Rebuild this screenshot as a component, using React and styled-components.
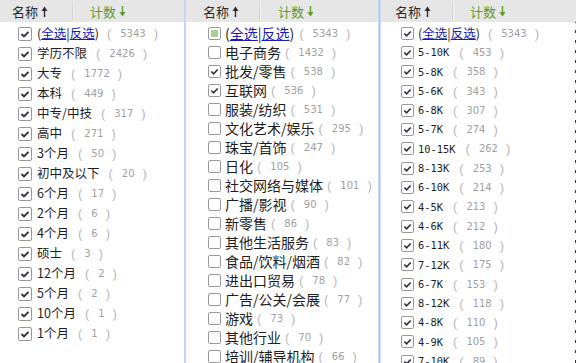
import React from "react";
import styled, { createGlobalStyle } from "styled-components";

const GlobalStyle = createGlobalStyle`
  html, body {
    margin: 0;
    padding: 0;
    background: #fff;
  }
  body {
    font-family: "Noto Sans CJK SC", "Liberation Sans", sans-serif;
  }
`;

const leftItems = [
  ["学历不限", 2426],
  ["大专", 1772],
  ["本科", 449],
  ["中专/中技", 317],
  ["高中", 271],
  ["3个月", 50],
  ["初中及以下", 20],
  ["6个月", 17],
  ["2个月", 6],
  ["4个月", 6],
  ["硕士", 3],
  ["12个月", 2],
  ["5个月", 2],
  ["10个月", 1],
  ["1个月", 1],
].map(([label, count]) => ({ label, count, checked: true }));

const middleItems = [
  ["电子商务", 1432, false],
  ["批发/零售", 538, true],
  ["互联网", 536, true],
  ["服装/纺织", 531, false],
  ["文化艺术/娱乐", 295, false],
  ["珠宝/首饰", 247, false],
  ["日化", 105, false],
  ["社交网络与媒体", 101, false],
  ["广播/影视", 90, false],
  ["新零售", 86, false],
  ["其他生活服务", 83, false],
  ["食品/饮料/烟酒", 82, false],
  ["进出口贸易", 78, false],
  ["广告/公关/会展", 77, false],
  ["游戏", 73, false],
  ["其他行业", 70, false],
  ["培训/辅导机构", 66, false],
].map(([label, count, checked]) => ({ label, count, checked }));

const rightItems = [
  ["5-10K", 453],
  ["5-8K", 358],
  ["5-6K", 343],
  ["6-8K", 307],
  ["5-7K", 274],
  ["10-15K", 262],
  ["8-13K", 253],
  ["6-10K", 214],
  ["4-5K", 213],
  ["4-6K", 212],
  ["6-11K", 180],
  ["7-12K", 175],
  ["6-7K", 153],
  ["8-12K", 118],
  ["4-8K", 110],
  ["4-9K", 105],
  ["7-10K", 89],
].map(([label, count]) => ({ label, count, checked: true }));

// per-panel metrics, measured off the screenshot
const panels = [
  {
    key: "edu",
    width: 184,
    head: { name: 12, divider: 72, count: 17 },
    rowH: 20,
    indent: 18,
    box: 14,
    font: 12.5,
    mono: false,
    gap: 9,
    all: "checked",
    items: leftItems,
  },
  {
    key: "industry",
    width: 192,
    head: { name: 17, divider: 73, count: 18 },
    rowH: 19,
    indent: 22,
    box: 13,
    font: 14,
    mono: false,
    gap: 4,
    all: "partial",
    items: middleItems,
  },
  {
    key: "salary",
    width: 195,
    head: { name: 14, divider: 71, count: 17 },
    rowH: 19.3,
    indent: 20,
    box: 13,
    font: 12.5,
    mono: true,
    gap: 10,
    all: "checked",
    items: rightItems,
    dotted: true,
  },
];

function Arrow({ down }) {
  return (
    <svg width="7" height="11" viewBox="0 0 7 11">
      {down ? (
        <>
          <line x1="3.5" y1="0" x2="3.5" y2="8" stroke="currentColor" strokeWidth="1.4" />
          <polygon points="0.5,6 6.5,6 3.5,10.5" fill="currentColor" />
        </>
      ) : (
        <>
          <line x1="3.5" y1="3" x2="3.5" y2="11" stroke="currentColor" strokeWidth="1.4" />
          <polygon points="0.5,5 6.5,5 3.5,0.5" fill="currentColor" />
        </>
      )}
    </svg>
  );
}

function Check({ state, size, gap }) {
  return (
    <Box $size={size} $gap={gap}>
      {state === "checked" && (
        <svg width={size - 2} height={size - 2} viewBox="0 0 12 12">
          <polyline
            points="2.5,6 5,8.5 9.5,3.8"
            fill="none"
            stroke="#2e3446"
            strokeWidth="1.9"
          />
        </svg>
      )}
      {state === "partial" && <Partial />}
    </Box>
  );
}

function Count({ n, gap }) {
  return (
    <CountWrap $gap={gap}>
      (<Num>{n}</Num>)
    </CountWrap>
  );
}

function FilterPanel({ p }) {
  return (
    <Panel $width={p.width} $dotted={p.dotted}>
      <Header>
        <SortCell $pad={p.head.name} $w={p.head.divider}>
          名称
          <Arrow />
        </SortCell>
        <Divider />
        <SortCell $pad={p.head.count} $green>
          计数
          <Arrow down />
        </SortCell>
      </Header>
      <List>
        <Row $h={p.rowH} $indent={p.indent} $font={p.font}>
          <Check state={p.all} size={p.box} gap={p.box === 14 ? 5 : 4} />
          <Label $font={p.font}>
            (<Link>全选</Link>|<Link>反选</Link>)
          </Label>
          <Count n={5343} gap={p.key === "industry" ? 5 : 8} />
        </Row>
        {p.items.map((it) => (
          <Row key={it.label} $h={p.rowH} $indent={p.indent} $font={p.font}>
            <Check
              state={it.checked ? "checked" : "none"}
              size={p.box}
              gap={p.box === 14 ? 5 : 4}
            />
            {p.mono ? <MonoLabel>{it.label}</MonoLabel> : <Label $font={p.font}>{it.label}</Label>}
            <Count n={it.count} gap={p.gap} />
          </Row>
        ))}
      </List>
    </Panel>
  );
}

export default function App() {
  return (
    <>
      <GlobalStyle />
      <Page>
        <FilterPanel p={panels[0]} />
        <Seam $w={2} />
        <FilterPanel p={panels[1]} />
        <Seam $w={3} />
        <FilterPanel p={panels[2]} />
      </Page>
    </>
  );
}

const Page = styled.div`
  display: flex;
  width: 576px;
  height: 363px;
  overflow: hidden;
  background: #fff;
`;

const Panel = styled.div`
  flex: none;
  width: ${(p) => p.$width}px;
  display: flex;
  flex-direction: column;
  overflow: hidden;
  ${(p) =>
    p.$dotted &&
    `background: repeating-linear-gradient(to bottom, #3a3a3a 0 3px, transparent 3px 10px) right top / 1px 100% no-repeat;`}
`;

const Seam = styled.div`
  flex: none;
  width: ${(p) => p.$w}px;
  background: linear-gradient(to right, #d3e2f5, #a9c6ea 50%, #e4eefa);
`;

const Header = styled.div`
  flex: none;
  height: 22px;
  display: flex;
  align-items: center;
  background: #e6e6e6;
  font-size: 13px;
  color: #2b2b2b;
`;

const SortCell = styled.span`
  box-sizing: border-box;
  display: flex;
  align-items: center;
  gap: 3px;
  width: ${(p) => (p.$w ? `${p.$w}px` : "auto")};
  padding-left: ${(p) => p.$pad}px;
  color: ${(p) => (p.$green ? "#5f9a2a" : "#2b2b2b")};
`;

const Divider = styled.span`
  width: 1px;
  height: 19px;
  background: #d2d2d2;
  box-shadow: 1px 0 0 #f3f3f3;
`;

const List = styled.div`
  padding-top: 1.5px;
`;

const Row = styled.div`
  box-sizing: border-box;
  height: ${(p) => p.$h}px;
  display: flex;
  align-items: center;
  padding-left: ${(p) => p.$indent}px;
  white-space: nowrap;
  color: #1e1e1e;
`;

const Box = styled.span`
  flex: none;
  box-sizing: border-box;
  width: ${(p) => p.$size}px;
  height: ${(p) => p.$size}px;
  margin-right: ${(p) => p.$gap}px;
  border: 1px solid #999;
  border-radius: 2px;
  background: #fff;
  display: flex;
  align-items: center;
  justify-content: center;
`;

const Partial = styled.span`
  width: 7px;
  height: 7px;
  background: #a6d28e;
`;

const Label = styled.span`
  font-size: ${(p) => p.$font}px;
  line-height: 1;
`;

const MonoLabel = styled.span`
  font-family: "DejaVu Sans Mono", "Liberation Mono", monospace;
  font-size: 10.4px;
  line-height: 1;
`;

const Link = styled.span`
  color: #1b1bb0;
  text-decoration: underline;
`;

const CountWrap = styled.span`
  display: inline-flex;
  align-items: center;
  margin-left: ${(p) => p.$gap}px;
  font-family: "Liberation Sans", sans-serif;
  font-size: 13px;
  color: #b8b8b8;
`;

const Num = styled.span`
  font-family: "DejaVu Sans", sans-serif;
  font-size: 10px;
  color: #a0a0a0;
  padding: 0 8px 0 9px;
`;
